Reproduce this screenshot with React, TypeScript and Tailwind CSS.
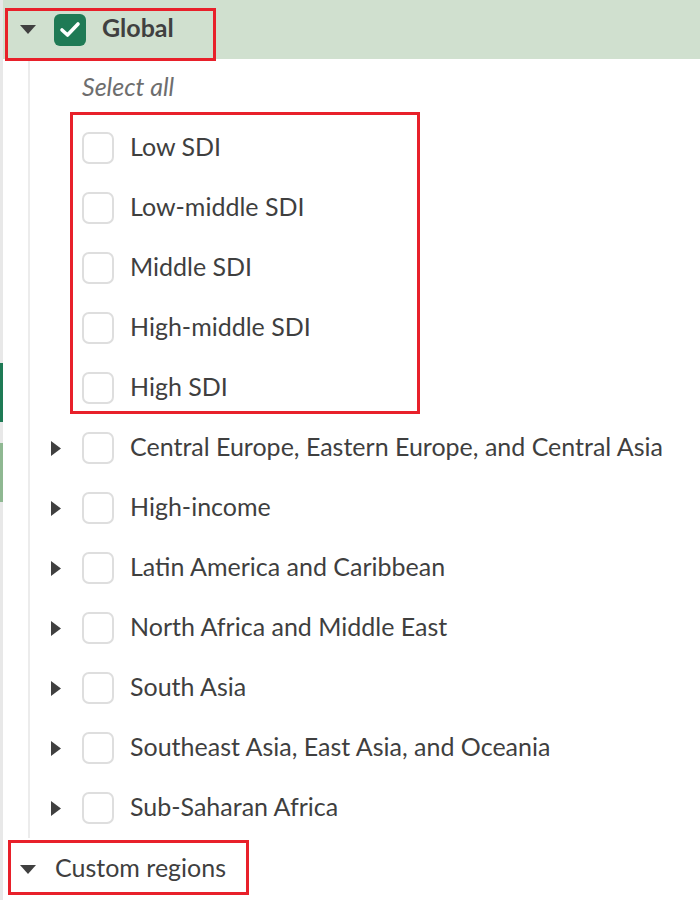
import React from 'react';

const regions = [
  'Central Europe, Eastern Europe, and Central Asia',
  'High-income',
  'Latin America and Caribbean',
  'North Africa and Middle East',
  'South Asia',
  'Southeast Asia, East Asia, and Oceania',
  'Sub-Saharan Africa',
];

const sdi = ['Low SDI', 'Low-middle SDI', 'Middle SDI', 'High-middle SDI', 'High SDI'];

function CaretDown() {
  return (
    <svg width="16" height="9" viewBox="0 0 16 9" className="shrink-0">
      <polygon points="0,0 16,0 8,9" fill="#404040" />
    </svg>
  );
}

function CaretRight() {
  return (
    <svg width="10" height="15" viewBox="0 0 10 15" className="shrink-0">
      <polygon points="0,0 10,7.5 0,15" fill="#404040" />
    </svg>
  );
}

function Box() {
  return <div className="w-8 h-8 shrink-0 rounded-[7px] border-2 border-[#dedede] bg-white" />;
}

function Row({ label, expandable }: { label: string; expandable?: boolean }) {
  return (
    <div className="h-[60px] flex items-center">
      <div className="w-[52px] pl-[21px] flex items-center">{expandable && <CaretRight />}</div>
      <Box />
      <span className="ml-4 mb-[4px] text-[25px] leading-none text-[#3f3f3f] whitespace-nowrap">{label}</span>
    </div>
  );
}

export default function App() {
  return (
    <div className="relative w-[700px] h-[900px] bg-white overflow-hidden flex font-['Lato',sans-serif]">
      {/* cut-off edge of the neighbouring panel */}
      <div className="w-[3px] shrink-0 bg-[#e8e8e8] flex flex-col">
        <div className="h-[363px]" />
        <div className="h-[59px] bg-[#1e7a55]" />
        <div className="h-[21px]" />
        <div className="h-[59px] bg-[#8fb892]" />
      </div>

      <div className="flex-1 flex flex-col">
        <div className="h-[59px] bg-[#d0e0cf] flex items-center">
          <div className="ml-[17px]"><CaretDown /></div>
          <div className="ml-[18px] w-8 h-8 rounded-[6px] bg-[#1f7a55] flex items-center justify-center">
            <svg width="22" height="17" viewBox="0 0 22 17">
              <polyline points="3,9 8.5,14 19,3" fill="none" stroke="white" strokeWidth="3.6" strokeLinecap="round" strokeLinejoin="round" />
            </svg>
          </div>
          <span className="ml-4 mb-[4px] text-[25px] leading-none font-bold text-[#404040]">Global</span>
        </div>

        <div className="ml-[25px] h-[779px] border-l-2 border-[#ececec]">
          <div className="h-[59px] flex items-center pl-[52px]">
            <span className="mb-[4px] text-[25px] leading-none italic text-[#6e6e6e]">Select all</span>
          </div>
          {sdi.map((s) => (
            <Row key={s} label={s} />
          ))}
          {regions.map((r) => (
            <Row key={r} label={r} expandable />
          ))}
        </div>

        <div className="h-[62px] flex items-center">
          <div className="ml-[17px]"><CaretDown /></div>
          <span className="ml-[19px] mb-[4px] text-[25px] leading-none text-[#3f3f3f]">Custom regions</span>
        </div>
      </div>

      {/* annotation boxes */}
      <div className="absolute left-[5px] top-[8px] w-[211px] h-[53px] border-[3px] border-[#e8202a] pointer-events-none" />
      <div className="absolute left-[70px] top-[112px] w-[350px] h-[302px] border-[3px] border-[#e8202a] pointer-events-none" />
      <div className="absolute left-[8px] top-[840px] w-[241px] h-[55px] border-[3px] border-[#e8202a] pointer-events-none" />
    </div>
  );
}
